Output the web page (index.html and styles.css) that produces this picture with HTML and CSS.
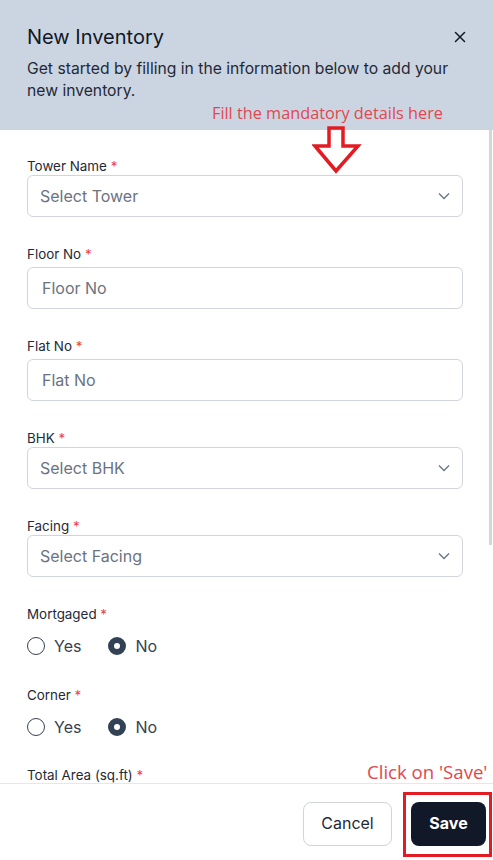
FILE: index.html
```html
<!DOCTYPE html>
<html lang="en">
<head>
<meta charset="utf-8">
<title>New Inventory</title>
<link rel="stylesheet" href="styles.css">
</head>
<body>
<div class="panel">
  <header class="head">
    <div class="head-row">
      <h1 class="title">New Inventory</h1>
      <button class="close" aria-label="Close">
        <svg width="12" height="12" viewBox="0 0 12 12"><path d="M1.5 1.5L10.5 10.5M10.5 1.5L1.5 10.5" stroke="#111827" stroke-width="1.5" stroke-linecap="round"/></svg>
      </button>
    </div>
    <p class="sub">Get started by filling in the information below to add your new inventory.</p>
    <span class="note note-top">Fill the mandatory details here</span>
  </header>

  <svg class="arrow" width="50" height="48" viewBox="0 0 50 48"><path d="M17 2H31V20H46L24 45L3 20H17Z" fill="none" stroke="#e31b23" stroke-width="3.5" stroke-linejoin="miter"/></svg>

  <main class="body">
    <div class="form">
      <div class="field sel">
        <label class="lbl">Tower Name <span class="req">*</span></label>
        <div class="box"><span class="ph">Select Tower</span><svg class="chev" width="12" height="8" viewBox="0 0 12 8"><path d="M1 1.5L6 6.5L11 1.5" fill="none" stroke="#6b7280" stroke-width="1.3"/></svg></div>
      </div>
      <div class="field txt">
        <label class="lbl">Floor No <span class="req">*</span></label>
        <div class="box input"><span class="ph">Floor No</span></div>
      </div>
      <div class="field txt">
        <label class="lbl">Flat No <span class="req">*</span></label>
        <div class="box input"><span class="ph">Flat No</span></div>
      </div>
      <div class="field sel">
        <label class="lbl">BHK <span class="req">*</span></label>
        <div class="box"><span class="ph">Select BHK</span><svg class="chev" width="12" height="8" viewBox="0 0 12 8"><path d="M1 1.5L6 6.5L11 1.5" fill="none" stroke="#6b7280" stroke-width="1.3"/></svg></div>
      </div>
      <div class="field sel">
        <label class="lbl">Facing <span class="req">*</span></label>
        <div class="box"><span class="ph">Select Facing</span><svg class="chev" width="12" height="8" viewBox="0 0 12 8"><path d="M1 1.5L6 6.5L11 1.5" fill="none" stroke="#6b7280" stroke-width="1.3"/></svg></div>
      </div>
      <div class="field radio-field">
        <label class="lbl">Mortgaged <span class="req">*</span></label>
        <div class="radios">
          <span class="opt"><span class="dot"></span>Yes</span>
          <span class="opt"><span class="dot on"></span>No</span>
        </div>
      </div>
      <div class="field radio-field">
        <label class="lbl">Corner <span class="req">*</span></label>
        <div class="radios">
          <span class="opt"><span class="dot"></span>Yes</span>
          <span class="opt"><span class="dot on"></span>No</span>
        </div>
      </div>
      <div class="field last">
        <label class="lbl">Total Area (sq.ft) <span class="req">*</span></label>
      </div>
    </div>
  </main>

  <span class="thumb"></span>
  <span class="note note-save">Click on 'Save'</span>

  <footer class="foot">
    <button class="btn cancel">Cancel</button>
    <button class="btn save">Save</button>
    <span class="save-mark"></span>
  </footer>
</div>
</body>
</html>
```

FILE: styles.css
```css
* { box-sizing: border-box; }
html, body { margin: 0; padding: 0; }
body {
  font-family: Inter, "Noto Sans", "Liberation Sans", sans-serif;
  color: #111827;
  background: #fff;
}
.panel {
  position: relative;
  width: 493px;
  height: 860px;
  display: flex;
  flex-direction: column;
  overflow: hidden;
}
.head {
  position: relative;
  background: #cbd5e1;
  padding: 24px 27px 0 27px;
  height: 130px;
  flex: none;
}
.head-row {
  display: flex;
  align-items: center;
  justify-content: space-between;
}
.title {
  margin: 0;
  font-size: 20px;
  font-weight: 400;
  line-height: 26px;
  color: #111827;
}
.close {
  border: 0;
  background: none;
  padding: 0;
  width: 12px;
  height: 12px;
  display: flex;
}
.sub {
  margin: 8px 0 0 0;
  font-size: 15.7px;
  line-height: 22px;
  color: #1f2937;
  width: 440px;
}
.note {
  position: absolute;
  font-family: "Open Sans", "Liberation Sans", sans-serif;
  color: #e2474f;
  font-size: 16.3px;
  line-height: 22px;
}
.note-top { left: 212px; top: 102px; }
.note-save { left: 367px; top: 760px; font-size: 18.6px; line-height: 24px; z-index: 3; }
.arrow {
  position: absolute;
  left: 312px;
  top: 126px;
  z-index: 3;
}
.thumb {
  position: absolute;
  right: 1px;
  top: 130px;
  width: 3px;
  height: 415px;
  background: #d6d6d6;
}
.body {
  flex: 1;
  overflow: hidden;
}
.form {
  padding: 28px 30px 0 27px;
  display: flex;
  flex-direction: column;
}
.field { display: flex; flex-direction: column; }
.lbl {
  font-size: 13.4px;
  line-height: 16px;
  color: #1f2937;
}
.req { color: #ef4444; }
.box {
  height: 42px;
  border: 1px solid #d1d5db;
  border-radius: 6px;
  display: flex;
  align-items: center;
  justify-content: space-between;
  padding: 0 12px 0 12px;
  background: #fff;
}
.box.input { padding-left: 14px; }
.ph { font-size: 16px; color: #6b7280; }
.sel .box { margin-top: 1px; }
.txt .box { margin-top: 5px; }
.field + .field { margin-top: 29px; }
.radio-field + .radio-field { margin-top: 31px; }
.last { margin-top: 30px !important; }
.radios {
  display: flex;
  gap: 27px;
  margin-top: 14px;
  height: 20px;
  align-items: center;
}
.opt {
  display: flex;
  align-items: center;
  gap: 9px;
  font-size: 16px;
  color: #374151;
}
.dot {
  width: 18px;
  height: 18px;
  border-radius: 50%;
  border: 1.3px solid #374151;
  background: #fff;
  display: block;
}
.dot.on {
  border: 6px solid #334155;
  background: #fff;
}
.foot {
  position: relative;
  flex: none;
  height: 77px;
  border-top: 1px solid #e5e7eb;
  background: #fff;
  display: flex;
  align-items: flex-start;
  justify-content: flex-end;
  gap: 19px;
  padding: 18px 7px 0 0;
}
.btn {
  height: 44px;
  border-radius: 8px;
  font-family: Inter, "Liberation Sans", sans-serif;
  font-size: 16px;
  line-height: 20px;
  padding: 0 12px 3px;
}
.cancel {
  width: 89px;
  background: #fff;
  border: 1px solid #d1d5db;
  color: #1f2937;
}
.save {
  width: 75px;
  background: #111827;
  border: 0;
  color: #fff;
  font-weight: 700;
}
.save-mark {
  position: absolute;
  left: 403px;
  top: 8px;
  width: 89px;
  height: 65px;
  border: 3px solid #e31b23;
}
```
